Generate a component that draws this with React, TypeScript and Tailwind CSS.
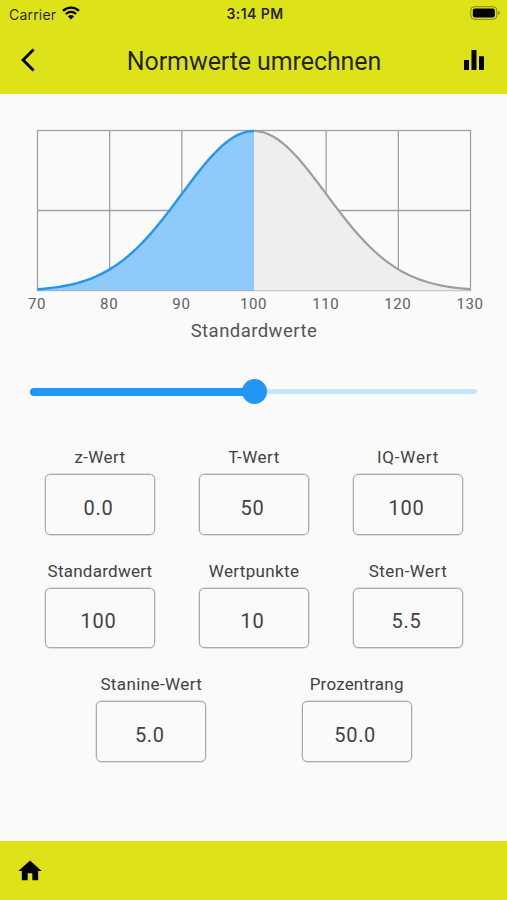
import React from "react";

interface Field {
  label: string;
  value: string;
  labelClass: string;
}

const FIELD_ROWS: Field[][] = [
  [
    { label: "z-Wert", value: "0.0", labelClass: "tracking-[0.4px]" },
    { label: "T-Wert", value: "50", labelClass: "tracking-[0.5px]" },
    { label: "IQ-Wert", value: "100", labelClass: "tracking-[0.8px]" },
  ],
  [
    { label: "Standardwert", value: "100", labelClass: "tracking-[0.25px]" },
    { label: "Wertpunkte", value: "10", labelClass: "tracking-[0.35px]" },
    { label: "Sten-Wert", value: "5.5", labelClass: "tracking-[0.45px]" },
  ],
  [
    { label: "Stanine-Wert", value: "5.0", labelClass: "tracking-[0.4px]" },
    { label: "Prozentrang", value: "50.0", labelClass: "tracking-[0.2px]" },
  ],
];

const TICKS = [70, 80, 90, 100, 110, 120, 130];
const MEAN = 100;
const SD = 10;
const LEFT = 37.5;
const TOP = 36.5;
const WIDTH = 433;
const HEIGHT = 160;
const BOTTOM = TOP + HEIGHT;

const toX = (v: number) => LEFT + ((v - 70) / 60) * WIDTH;
const toY = (v: number) => BOTTOM - HEIGHT * Math.exp(-((v - MEAN) ** 2) / (2 * SD * SD)) + 0.5;

function curve(from: number, to: number) {
  const points: string[] = [];
  for (let v = from; v <= to; v += 0.5) {
    points.push(`${toX(v).toFixed(2)} ${toY(v).toFixed(2)}`);
  }
  return "M" + points.join("L");
}

function area(from: number, to: number) {
  return `${curve(from, to)}L${toX(to)} ${BOTTOM}L${toX(from)} ${BOTTOM}Z`;
}

function StatusBar() {
  return (
    <div className="grid grid-cols-3 items-center h-7 pl-[9px] pr-[6px] font-['Inter',sans-serif] text-[14px] text-black/85">
      <div className="flex items-center gap-[6px]">
        <span className="tracking-[0.2px]">Carrier</span>
        <svg width="18" height="14" viewBox="0 0 18 14" className="-mt-[2px] text-black">
          <path d="M1 4.8a11.6 11.6 0 0 1 16 0" fill="none" stroke="currentColor" strokeWidth="2.4" />
          <path d="M3.9 8a7.4 7.4 0 0 1 10.2 0" fill="none" stroke="currentColor" strokeWidth="2.2" />
          <path d="M9 13.6 5.9 10.4a4.5 4.5 0 0 1 6.2 0z" fill="currentColor" />
        </svg>
      </div>
      <span className="-mt-px text-center font-semibold tracking-[0.45px] whitespace-nowrap">3:14 PM</span>
      <svg width="31" height="14" viewBox="0 0 31 14" className="-mt-[2px] justify-self-end">
        <rect x="0.8" y="0.7" width="26" height="12.6" rx="3.6" fill="none" stroke="#000" strokeOpacity="0.4" />
        <rect x="2.8" y="2.6" width="22" height="8.8" rx="1.8" fill="#000" />
        <path d="M28.4 4.8c1.8.8 1.8 3.6 0 4.4z" fill="#000" fillOpacity="0.45" />
      </svg>
    </div>
  );
}

function BellCurve() {
  return (
    <svg width="507" height="256" viewBox="0 0 507 256" className="block font-['Roboto',sans-serif]">
      {/* Grid */}
      <g stroke="#a2a2a2" strokeWidth="1.3" fill="none">
        <rect x={LEFT} y={TOP} width={WIDTH} height={HEIGHT} />
        <path d={`M${LEFT} ${TOP + HEIGHT / 2}h${WIDTH}`} />
        {TICKS.slice(1, -1).map((t) => (
          <path key={t} d={`M${toX(t)} ${TOP}v${HEIGHT}`} />
        ))}
      </g>
      {/* Distribution */}
      <path d={area(100, 130)} fill="#eeeeee" />
      <path d={area(70, 100)} fill="#90caf9" />
      <path d={curve(100, 130)} fill="none" stroke="#9e9e9e" strokeWidth="2.2" />
      <path d={curve(70, 100)} fill="none" stroke="#2196f3" strokeWidth="2.4" />
      {/* Axis */}
      {TICKS.map((t) => (
        <text key={t} x={toX(t) - 0.8} y="215" textAnchor="middle" fontSize="15" fill="#616161" textLength={t < 100 ? 17.6 : 26.4}>
          {t}
        </text>
      ))}
      <text x="253.7" y="243" textAnchor="middle" fontSize="18.5" fill="#555555" textLength="126">
        Standardwerte
      </text>
    </svg>
  );
}

function Slider() {
  return (
    <div className="relative flex items-center h-[26px] mt-[28.5px] mx-[30px]">
      <div className="w-[224px] h-[8px] rounded-full bg-[#2196f3]" />
      <div className="flex-1 h-[5px] rounded-r-full bg-[#c5e3fa]" />
      <div className="absolute left-[211.5px] size-[25px] rounded-full bg-[#2196f3]" />
    </div>
  );
}

function ValueField({ label, value, labelClass }: Field) {
  return (
    <div className="flex flex-col items-center w-[110px]">
      <span className={`h-[26px] leading-[26px] text-[17px] whitespace-nowrap ${labelClass}`}>{label}</span>
      <div className="flex items-center justify-center w-full h-[60.7px] mt-[4px] pr-[3px] pt-[7px] border border-[#a9a9a9] rounded-[5px] text-[20px] tracking-[0.7px] shadow-[0_0_0_0.4px_#c4c4c4]">
        {value}
      </div>
    </div>
  );
}

export default function App() {
  return (
    <div className="flex flex-col w-[507px] h-[900px] overflow-hidden bg-[#fafafa] font-['Roboto',sans-serif] text-[#424242]">
      <header className="h-[94px] bg-[#dde318]">
        <StatusBar />
        <div className="flex items-center justify-between h-[63px] pl-[21px] pr-[18px] text-black">
          <svg width="28" height="28" viewBox="0 0 24 24" fill="currentColor">
            <path d="M11.67 3.87 9.9 2.1 0 12l9.9 9.9 1.77-1.77L3.54 12z" />
          </svg>
          <h1 className="text-[25px] leading-none tracking-[-0.1px] pt-[3px] text-black/85">Normwerte umrechnen</h1>
          <svg width="30" height="30" viewBox="0 0 24 24" fill="currentColor">
            <path d="M10 20h4V4h-4v16zm-6 0h4v-8H4v8zM16 9v11h4V9h-4z" />
          </svg>
        </div>
      </header>

      <main className="flex-1">
        <BellCurve />
        <Slider />
        <div className="flex flex-col gap-[23px] mt-[39.4px] pl-px">
          {FIELD_ROWS.map((row, i) => (
            <div key={i} className="flex justify-evenly">
              {row.map((field) => (
                <ValueField key={field.label} {...field} />
              ))}
            </div>
          ))}
        </div>
      </main>

      <footer className="flex items-center h-[59px] pl-[16px] bg-[#dde318]">
        <svg width="28" height="28" viewBox="0 0 24 24" fill="#000">
          <path d="M10 20v-6h4v6h5v-8h3L12 3 2 12h3v8z" />
        </svg>
      </footer>
    </div>
  );
}
